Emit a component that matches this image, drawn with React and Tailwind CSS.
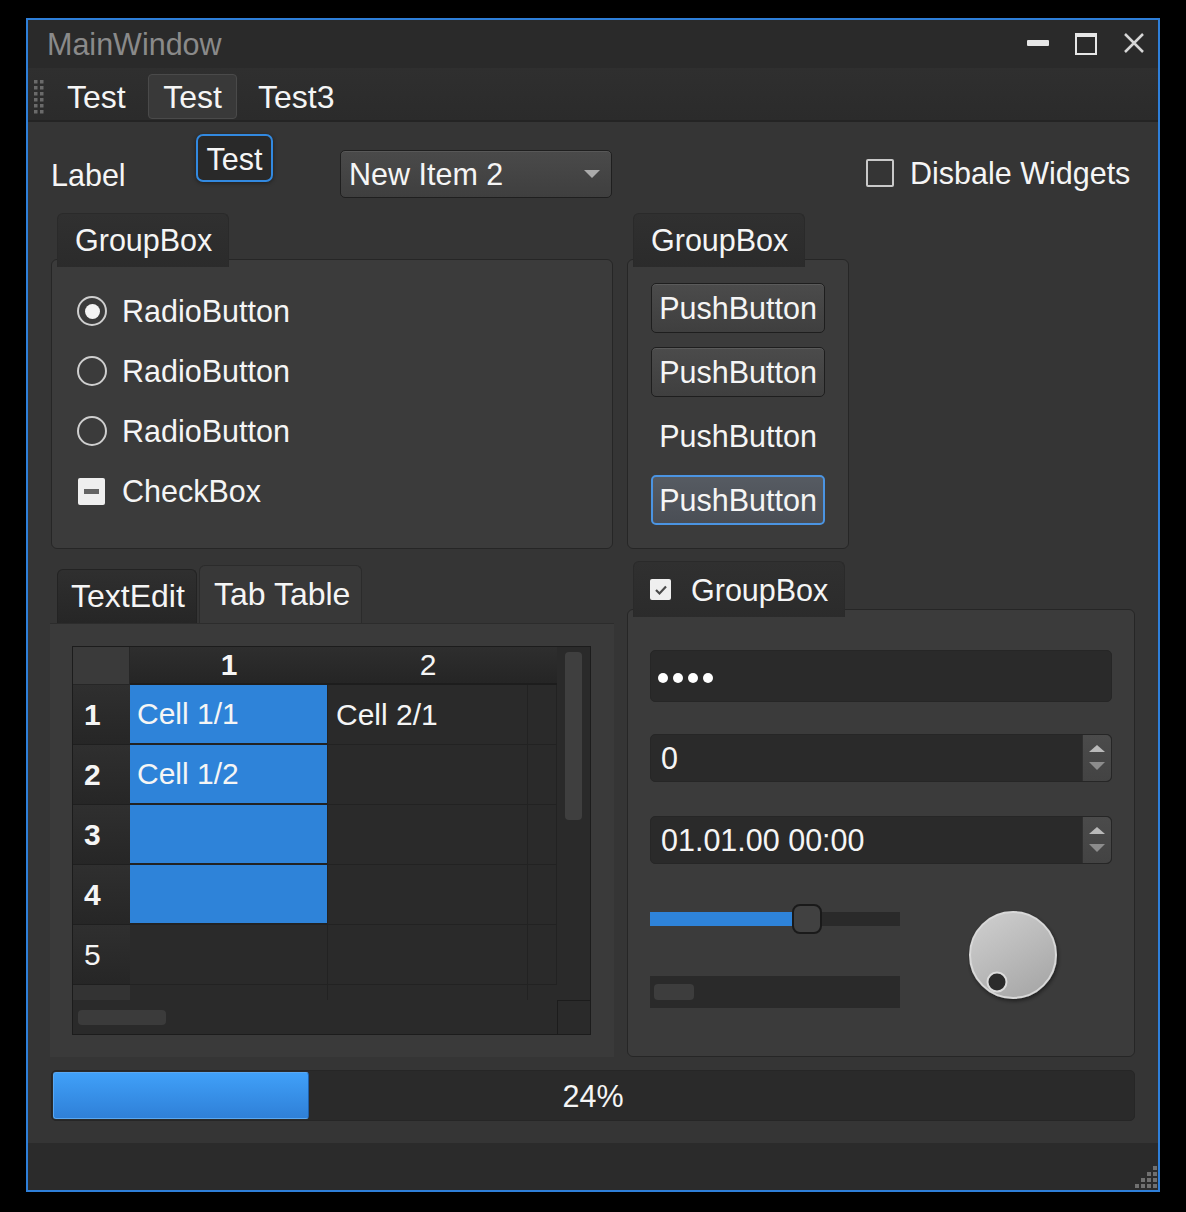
import React from "react";

function Radio({ checked }) {
  return (
    <span className="w-[30px] h-[30px] rounded-full border-2 border-[#cfcfcf] flex items-center justify-center shrink-0">
      {checked ? <span className="w-[15px] h-[15px] rounded-full bg-[#f4f4f4]" /> : null}
    </span>
  );
}

function PushButton({ variant }) {
  if (variant === "flat")
    return <div className="w-[174px] h-[50px] flex items-center justify-center">PushButton</div>;
  if (variant === "focus")
    return (
      <div className="w-[174px] h-[50px] rounded-[5px] border-2 border-[#4b94e2] bg-gradient-to-b from-[#565b62] to-[#4a4e55] flex items-center justify-center">
        PushButton
      </div>
    );
  return (
    <div className="w-[174px] h-[50px] rounded-[5px] border border-[#1e1e1e] bg-gradient-to-b from-[#4b4b4b] to-[#3f3f3f] shadow-[inset_0_1px_0_rgba(255,255,255,0.09)] flex items-center justify-center">
      PushButton
    </div>
  );
}

function SpinArrows() {
  return (
    <div className="ml-auto h-full w-[29px] rounded-r-[5px] border-l border-[#303030] bg-gradient-to-b from-[#4b4b4b] to-[#434343] flex items-center justify-center">
      <svg width="16" height="26" viewBox="0 0 16 26">
        <path d="M0 7 L8 0 L16 7 Z" fill="#b9b9b9" />
        <path d="M0 17 L16 17 L8 25 Z" fill="#8c8c8c" />
      </svg>
    </div>
  );
}

function RowHeader({ children, bold, partial }) {
  return (
    <div
      className={
        partial
          ? "bg-[#333333]"
          : "bg-gradient-to-b from-[#2f2f2f] to-[#262626] border-b border-[#1f1f1f] flex items-center pl-[11px] " +
            (bold ? "font-bold" : "")
      }
    >
      {children}
    </div>
  );
}

function BlueCell({ children }) {
  return (
    <div className="bg-[#2e83d9] border-b-2 border-r border-[#222222] flex items-center pl-[7px]">{children}</div>
  );
}

function Cell({ children }) {
  return <div className="bg-[#2a2a2a] border-b border-r border-[#222222] flex items-center pl-[8px]">{children}</div>;
}

export default function App() {
  return (
    <div className="w-[1186px] h-[1212px] bg-black pt-[18px] pl-[26px] font-['Liberation_Sans',Arial,sans-serif] text-[30.5px] leading-[34px] text-[#f5f5f5]">
      <div className="w-[1134px] h-[1174px] border-2 border-[#2e7fd9] bg-[#353535] flex flex-col">
        {/* Title bar */}
        <div className="h-[48px] shrink-0 bg-[#2a2a2a] flex items-center">
          <span className="ml-[19px] text-[#8a8a8a]">MainWindow</span>
          <svg className="ml-auto mr-[12px]" width="120" height="48" viewBox="0 0 120 48">
            <rect x="1" y="20" width="22" height="6" rx="1" fill="#e6e6e6" />
            <rect x="50" y="14" width="20" height="20" fill="none" stroke="#e6e6e6" strokeWidth="2" />
            <rect x="49" y="13" width="22" height="4" fill="#e6e6e6" />
            <path d="M99 14 L117 32 M117 14 L99 32" stroke="#d6d6d6" strokeWidth="2.5" />
          </svg>
        </div>

        {/* Menu bar */}
        <div className="h-[54px] shrink-0 bg-gradient-to-b from-[#2f2f2f] to-[#2b2b2b] border-b-2 border-[#242424] flex items-start text-[32px]">
          <svg className="ml-[6px] mt-[12px]" width="10" height="34" viewBox="0 0 10 34">
            {[0, 1, 2, 3, 4, 5].map((r) => (
              <g key={r} fill="#6a6a6a">
                <rect x="0" y={r * 6} width="3.5" height="3.5" />
                <rect x="6" y={r * 6} width="3.5" height="3.5" />
              </g>
            ))}
          </svg>
          <div className="ml-[7px] mt-[6px] flex items-center gap-[5px]">
            <div className="w-[92px] pl-[16px] h-[45px] flex items-center">Test</div>
            <div className="w-[89px] h-[45px] flex items-center justify-center border border-[#4a4a4a] rounded-[4px] bg-[#393939]">
              Test
            </div>
            <div className="pl-[16px] h-[45px] flex items-center">Test3</div>
          </div>
        </div>

        {/* Content */}
        <div className="flex-1 flex flex-col">
          {/* Row 1 */}
          <div className="h-[91px] shrink-0 flex items-start">
            <div className="ml-[23px] mt-[36px] w-[145px]">Label</div>
            <div className="mt-[12px] w-[77px] h-[48px] rounded-[7px] border-2 border-[#3289e0] bg-[#292929] shadow-[0_1px_4px_rgba(0,0,0,0.45)] flex items-center justify-center pt-[1px]">
              Test
            </div>
            <div className="ml-[67px] mt-[28px] w-[272px] h-[48px] rounded-[5px] border border-[#1f1f1f] bg-gradient-to-b from-[#4a4a4a] to-[#3f3f3f] shadow-[inset_0_1px_0_rgba(255,255,255,0.08)] flex items-center pl-[8px] pr-[11px]">
              <span>New Item 2</span>
              <svg className="ml-auto" width="16" height="9" viewBox="0 0 16 9">
                <path d="M0 0 H16 L8 8 Z" fill="#ababab" />
              </svg>
            </div>
            <div className="ml-[254px] mt-[37px] flex items-center gap-[16px]">
              <span className="w-[28px] h-[28px] rounded-[2px] border-2 border-[#c9c9c9]" />
              <span className="leading-[28px]">Disbale Widgets</span>
            </div>
          </div>

          {/* Row 2 */}
          <div className="shrink-0 flex items-start">
            {/* GroupBox 1 */}
            <div className="ml-[23px] w-[562px]">
              <div className="relative z-10 ml-[6px] w-[172px] h-[54px] rounded-t-[6px] border border-b-0 border-[#2a2a2a] bg-gradient-to-b from-[#303030] to-[#2b2b2b] pl-[17px] pt-[9px]">
                GroupBox
              </div>
              <div className="-mt-[8px] h-[290px] rounded-[6px] border border-[#262626] bg-[#3b3b3b] pt-[21px] pl-[25px]">
                <div className="h-[60px] flex items-center">
                  <Radio checked />
                  <span className="ml-[15px]">RadioButton</span>
                </div>
                <div className="h-[60px] flex items-center">
                  <Radio />
                  <span className="ml-[15px]">RadioButton</span>
                </div>
                <div className="h-[60px] flex items-center">
                  <Radio />
                  <span className="ml-[15px]">RadioButton</span>
                </div>
                <div className="h-[60px] flex items-center">
                  <span className="ml-[1px] w-[27px] h-[27px] rounded-[2px] bg-[#efefef] flex items-center justify-center">
                    <span className="w-[15px] h-[5px] bg-[#646464]" />
                  </span>
                  <span className="ml-[17px]">CheckBox</span>
                </div>
              </div>
            </div>

            {/* GroupBox 2 */}
            <div className="ml-[14px] w-[222px]">
              <div className="relative z-10 ml-[6px] w-[172px] h-[54px] rounded-t-[6px] border border-b-0 border-[#2a2a2a] bg-gradient-to-b from-[#303030] to-[#2b2b2b] pl-[17px] pt-[9px]">
                GroupBox
              </div>
              <div className="-mt-[8px] h-[290px] rounded-[6px] border border-[#262626] bg-[#3b3b3b] pt-[23px] pl-[23px] flex flex-col gap-[14px]">
                <PushButton />
                <PushButton />
                <PushButton variant="flat" />
                <PushButton variant="focus" />
              </div>
            </div>
          </div>

          {/* Row 3 */}
          <div className="mt-[12px] shrink-0 flex items-start">
            {/* Tab widget */}
            <div className="ml-[22px] w-[564px]">
              <div className="h-[62px] flex items-end pl-[7px] gap-[2px] text-[32px]">
                <div className="w-[140px] h-[54px] rounded-t-[6px] border border-b-0 border-[#232323] bg-gradient-to-b from-[#2f2f2f] to-[#262626] pl-[13px] pt-[9px]">
                  TextEdit
                </div>
                <div className="w-[163px] h-[58px] rounded-t-[6px] border border-b-0 border-[#2b2b2b] bg-[#383838] pl-[14px] pt-[11px]">
                  Tab Table
                </div>
              </div>
              <div className="h-[434px] bg-[#3a3a3a] border-t border-[#2c2c2c] pt-[22px] pl-[22px] text-[30px]">
                <div className="w-[519px] h-[389px] border border-[#1c1c1c] bg-[#2a2a2a] flex flex-col">
                  <div className="h-[353px] flex">
                    <div className="w-[484px] h-[353px] overflow-hidden grid grid-cols-[57px_198px_200px_29px] grid-rows-[38px_60px_60px_60px_60px_60px_15px]">
                      {/* header */}
                      <div className="bg-[#3a3a3a] border-r border-b border-[#262626]" />
                      <div className="bg-gradient-to-b from-[#2e2e2e] to-[#252525] border-b-2 border-[#1d1d1d] flex items-center justify-center font-bold">
                        1
                      </div>
                      <div className="bg-gradient-to-b from-[#2e2e2e] to-[#252525] border-b-2 border-[#1d1d1d] flex items-center justify-center">
                        2
                      </div>
                      <div className="bg-gradient-to-b from-[#2e2e2e] to-[#252525] border-b-2 border-[#1d1d1d]" />
                      {/* row 1 */}
                      <RowHeader bold>1</RowHeader>
                      <BlueCell>Cell 1/1</BlueCell>
                      <Cell>Cell 2/1</Cell>
                      <Cell />
                      {/* row 2 */}
                      <RowHeader bold>2</RowHeader>
                      <BlueCell>Cell 1/2</BlueCell>
                      <Cell />
                      <Cell />
                      {/* row 3 */}
                      <RowHeader bold>3</RowHeader>
                      <BlueCell />
                      <Cell />
                      <Cell />
                      {/* row 4 */}
                      <RowHeader bold>4</RowHeader>
                      <BlueCell />
                      <Cell />
                      <Cell />
                      {/* row 5 */}
                      <RowHeader>5</RowHeader>
                      <Cell />
                      <Cell />
                      <Cell />
                      {/* row 6 partial */}
                      <RowHeader partial />
                      <div className="bg-[#2a2a2a] border-r border-[#222222]" />
                      <div className="bg-[#2a2a2a] border-r border-[#222222]" />
                      <div className="bg-[#2a2a2a]" />
                    </div>
                    <div className="w-[33px] h-[353px] bg-[#2a2a2a] pt-[5px] pl-[8px]">
                      <div className="w-[17px] h-[168px] rounded-[4px] bg-[#3f3f3f]" />
                    </div>
                  </div>
                  <div className="h-[34px] flex">
                    <div className="w-[484px] h-[34px] pt-[10px] pl-[5px]">
                      <div className="w-[88px] h-[15px] rounded-[4px] bg-[#3b3b3b]" />
                    </div>
                    <div className="w-[33px] h-[34px] border-l border-t border-[#1c1c1c] bg-[#2a2a2a]" />
                  </div>
                </div>
              </div>
            </div>

            {/* GroupBox 3 */}
            <div className="ml-[13px] w-[508px]">
              <div className="relative z-10 ml-[6px] w-[212px] h-[56px] rounded-t-[6px] border border-b-0 border-[#2a2a2a] bg-gradient-to-b from-[#303030] to-[#2b2b2b] pl-[16px] flex items-center">
                <span className="w-[21px] h-[21px] rounded-[2px] bg-[#efefef] flex items-center justify-center">
                  <svg width="14" height="12" viewBox="0 0 14 12">
                    <path d="M2 6 L5.5 9.5 L12 2.5" fill="none" stroke="#4a4a4a" strokeWidth="2.2" />
                  </svg>
                </span>
                <span className="ml-[20px]">GroupBox</span>
              </div>
              <div className="-mt-[8px] h-[448px] rounded-[6px] border border-[#262626] bg-[#3b3b3b] pt-[40px] pl-[22px]">
                <div className="w-[462px] h-[52px] rounded-[5px] border border-[#262626] bg-[#2a2a2a] flex items-center pl-[7px] pt-[3px] gap-[5px]">
                  <span className="w-[10px] h-[10px] rounded-full bg-white" />
                  <span className="w-[10px] h-[10px] rounded-full bg-white" />
                  <span className="w-[10px] h-[10px] rounded-full bg-white" />
                  <span className="w-[10px] h-[10px] rounded-full bg-white" />
                </div>
                <div className="mt-[32px] w-[462px] h-[48px] rounded-[5px] border border-[#262626] bg-[#2a2a2a] flex items-center pl-[10px]">
                  <span>0</span>
                  <SpinArrows />
                </div>
                <div className="mt-[34px] w-[462px] h-[48px] rounded-[5px] border border-[#262626] bg-[#2a2a2a] flex items-center pl-[10px]">
                  <span>01.01.00 00:00</span>
                  <SpinArrows />
                </div>
                <div className="mt-[40px] flex items-start">
                  <div className="w-[250px]">
                    <div className="h-[30px] flex items-center">
                      <div className="w-[142px] h-[14px] bg-[#2e83d9]" />
                      <div className="w-[30px] h-[30px] rounded-[8px] border-2 border-[#1a1a1a] bg-[#414141]" />
                      <div className="flex-1 h-[14px] bg-[#2a2a2a]" />
                    </div>
                    <div className="mt-[42px] h-[32px] bg-[#2a2a2a] pt-[8px] pl-[4px]">
                      <div className="w-[40px] h-[16px] rounded-[4px] bg-[#3d3d3d]" />
                    </div>
                  </div>
                  <svg className="ml-[68px] mt-[6px]" width="96" height="96" viewBox="0 0 96 96">
                    <defs>
                      <linearGradient id="dialg" x1="0.2" y1="0" x2="0.8" y2="1">
                        <stop offset="0" stopColor="#cdcdcd" />
                        <stop offset="1" stopColor="#a6a6a6" />
                      </linearGradient>
                      <filter id="dials" x="-20%" y="-20%" width="140%" height="140%">
                        <feDropShadow dx="1" dy="2" stdDeviation="2" floodColor="#000" floodOpacity="0.5" />
                      </filter>
                    </defs>
                    <circle cx="45" cy="45" r="43" fill="url(#dialg)" stroke="#d8d8d8" strokeWidth="2" filter="url(#dials)" />
                    <circle cx="29" cy="72" r="9.5" fill="#2b2b2b" stroke="#dcdcdc" strokeWidth="2" />
                  </svg>
                </div>
              </div>
            </div>
          </div>

          {/* Progress */}
          <div className="mt-[13px] ml-[23px] w-[1084px] h-[51px] rounded-[5px] border border-[#262626] bg-[#2a2a2a] p-[1px] grid">
            <div className="col-start-1 row-start-1 w-[256px] h-full rounded-[3px] border border-[#5aa8f2] border-r-[#1f5fa8] bg-gradient-to-b from-[#40a0f8] to-[#2f80d8]" />
            <div className="col-start-1 row-start-1 flex items-center justify-center">24%</div>
          </div>
        </div>

        {/* Status bar */}
        <div className="h-[47px] shrink-0 bg-[#2b2b2b] flex items-end justify-end pr-[1px] pb-[2px]">
          <svg width="24" height="24" viewBox="0 0 24 24">
            {[0, 1, 2, 3].map((r) =>
              Array.from({ length: r + 1 }).map((_, c) => (
                <rect key={r + "-" + c} x={20 - 6 * c} y={2 + 6 * r} width="4" height="4" fill="#707070" />
              ))
            )}
          </svg>
        </div>
      </div>
    </div>
  );
}
